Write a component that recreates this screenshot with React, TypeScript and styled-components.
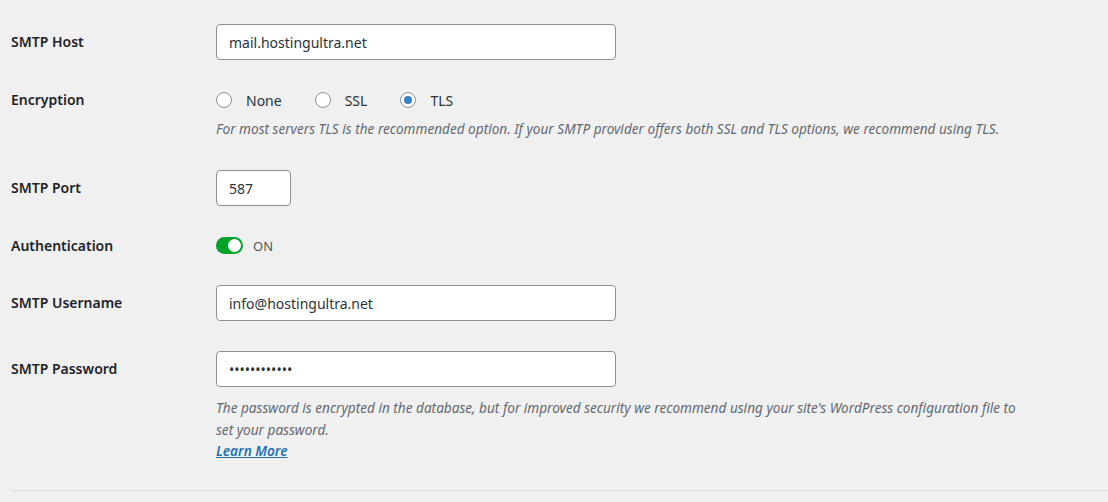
import React from 'react'
import styled, { createGlobalStyle } from 'styled-components'

const Global = createGlobalStyle`
  html, body {
    margin: 0;
    padding: 0;
    background: #f0f0f1;
    font-family: "Noto Sans", "Liberation Sans", sans-serif;
    color: #1d2327;
  }
`

const Page = styled.div`
  padding: 9px 0 0 11px;
  width: 1097px;
`

const Row = styled.div`
  display: grid;
  grid-template-columns: 205px 1fr;
  padding: 15px 0;
`

const Label = styled.div<{ $h: number }>`
  height: ${p => p.$h}px;
  display: flex;
  align-items: center;
  font-size: 14px;
  font-weight: 600;
  color: #1d2327;
  margin-top: -1px;
`

const Field = styled.div`
  display: flex;
  flex-direction: column;
`

const TextInput = styled.input<{ $w: number }>`
  box-sizing: border-box;
  width: ${p => p.$w}px;
  height: 36px;
  margin: 0;
  padding: 0 12px;
  border: 1px solid #8c8f94;
  border-radius: 4px;
  background: #fff;
  font-family: "Noto Sans", "Liberation Sans", sans-serif;
  font-size: 14px;
  color: #2c3338;
  outline: none;
`

const RadioGroup = styled.div`
  display: flex;
  align-items: center;
  height: 20px;
  gap: 33px;
`

const RadioItem = styled.label`
  display: flex;
  align-items: center;
  gap: 14px;
  font-size: 14px;
  color: #2c3338;
`

const RadioCircle = styled.span<{ $on?: boolean }>`
  box-sizing: border-box;
  width: 16px;
  height: 16px;
  border-radius: 50%;
  border: 1px solid #8c8f94;
  background: #fff;
  display: flex;
  align-items: center;
  justify-content: center;
  &::after {
    content: '';
    display: ${p => (p.$on ? 'block' : 'none')};
    width: 8px;
    height: 8px;
    border-radius: 50%;
    background: #3582c4;
  }
`

const Description = styled.p<{ $mt: number }>`
  margin: ${p => p.$mt}px 0 0;
  font-size: 13.6px;
  font-style: italic;
  line-height: 22px;
  color: #646970;
  max-width: 810px;
`

const LearnMore = styled.a`
  display: block;
  align-self: flex-start;
  font-size: 13.6px;
  font-style: italic;
  font-weight: 600;
  line-height: 20px;
  color: #2271b1;
  text-decoration: underline;
  margin-bottom: 14px;
`

const ToggleRow = styled.div`
  display: flex;
  align-items: center;
  height: 19px;
  gap: 10px;
`

const Toggle = styled.span`
  box-sizing: border-box;
  width: 27px;
  height: 17px;
  border-radius: 9px;
  background: #00a32a;
  display: flex;
  align-items: center;
  justify-content: flex-end;
  padding-right: 2px;
  &::after {
    content: '';
    width: 13px;
    height: 13px;
    border-radius: 50%;
    background: #fff;
  }
`

const ToggleText = styled.span`
  font-size: 13px;
  color: #50575e;
`

const Divider = styled.hr`
  border: 0;
  border-top: 1px solid #dcdcde;
  margin: 0;
`

export default function App() {
  return (
    <>
      <Global />
      <Page>
        <Row>
          <Label $h={36}>SMTP Host</Label>
          <Field>
            <TextInput $w={400} defaultValue="mail.hostingultra.net" />
          </Field>
        </Row>
        <Row>
          <Label $h={20}>Encryption</Label>
          <Field>
            <RadioGroup>
              <RadioItem><RadioCircle />None</RadioItem>
              <RadioItem><RadioCircle />SSL</RadioItem>
              <RadioItem><RadioCircle $on />TLS</RadioItem>
            </RadioGroup>
            <Description $mt={8}>
              For most servers TLS is the recommended option. If your SMTP provider offers both SSL and TLS options, we recommend using TLS.
            </Description>
          </Field>
        </Row>
        <Row>
          <Label $h={36}>SMTP Port</Label>
          <Field>
            <TextInput $w={75} defaultValue="587" />
          </Field>
        </Row>
        <Row>
          <Label $h={20}>Authentication</Label>
          <Field>
            <ToggleRow>
              <Toggle />
              <ToggleText>ON</ToggleText>
            </ToggleRow>
          </Field>
        </Row>
        <Row>
          <Label $h={36}>SMTP Username</Label>
          <Field>
            <TextInput $w={400} defaultValue="info@hostingultra.net" />
          </Field>
        </Row>
        <Row>
          <Label $h={36}>SMTP Password</Label>
          <Field>
            <TextInput $w={400} type="password" defaultValue="abcdefghijkl" />
            <Description $mt={10}>
              The password is encrypted in the database, but for improved security we recommend using your site's WordPress configuration file to set your password.
            </Description>
            <LearnMore href="#">Learn More</LearnMore>
          </Field>
        </Row>
        <Divider />
      </Page>
    </>
  )
}
